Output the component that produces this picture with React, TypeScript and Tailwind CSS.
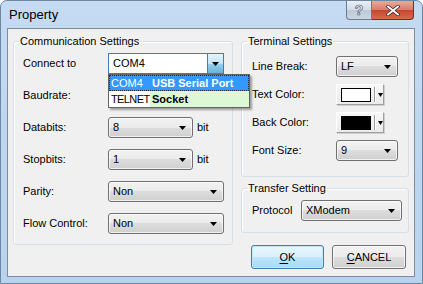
import React from "react";

const Arrow = ({ w = 7 }: { w?: number }) => (
  <svg width={w} height={4} viewBox={`0 0 ${w} 4`} className="shrink-0">
    <polygon points={`0,0 ${w},0 ${w / 2},4`} fill="#000" />
  </svg>
);

const Combo = ({ value, className }: { value: string; className: string }) => (
  <div
    className={`h-[21px] flex items-center justify-between pl-[4px] pr-[6px] border border-[#707070] rounded-[3px] shadow-[inset_0_0_0_1px_rgba(255,255,255,0.7)] bg-[linear-gradient(to_bottom,#f2f2f2_0%,#ebebeb_50%,#dddddd_50%,#cfcfcf_100%)] ${className}`}
  >
    <span>{value}</span>
    <Arrow />
  </div>
);

const ColorBtn = ({ color }: { color: string }) => (
  <div className="h-[21px] w-[48px] flex items-center border border-t-white border-l-white border-r-[#a0a0a0] border-b-[#a0a0a0] bg-[linear-gradient(to_bottom,#f7f7f7,#ebebeb)] shadow-[1px_1px_0_#d0d0d0]">
    <div className={`ml-[4px] w-[30px] h-[14px] border border-black ${color}`} />
    <div className="ml-[3px] w-[2px] h-[15px] border-l border-l-[#a0a0a0] border-r border-r-white" />
    <div className="ml-[2px]">
      <Arrow w={5} />
    </div>
  </div>
);

const Label = ({ children }: { children: React.ReactNode }) => (
  <span className="leading-[21px]">{children}</span>
);

export default function App() {
  return (
    <div className="w-[423px] h-[284px] flex flex-col font-['Liberation_Sans',Arial,sans-serif] text-[11px] text-black bg-[linear-gradient(to_bottom,#c4dbf2,#bcd6ef_60%,#b7d3ee)] border border-[#6d87a3] rounded-t-[7px] overflow-hidden">
      {/* Title bar */}
      <div className="h-[27px] flex justify-between pl-[8px] pr-[8px]">
        <span className="self-center text-[13px] mt-[1px] text-black">Property</span>
        <div className="flex self-start">
          <div className="w-[26px] h-[19px] flex items-center justify-center border border-t-0 border-[#6b7c8e] rounded-bl-[4px] bg-[linear-gradient(to_bottom,#e8eef4,#d2dce6_50%,#bccad8_50%,#c9d6e3)]">
            <span className="text-[14px] font-bold text-white [-webkit-text-stroke:0.6px_#3d4b5a] leading-none">?</span>
          </div>
          <div className="w-[42px] h-[19px] flex items-center justify-center border border-t-0 border-l-0 border-[#7a2b22] rounded-br-[4px] bg-[linear-gradient(to_bottom,#e9a99b,#d97c68_50%,#c4462f_50%,#d86a4e)]">
            <svg width="14" height="11" viewBox="0 0 14 11">
              <path d="M2 1.5 L12 9.5 M12 1.5 L2 9.5" stroke="#3b2a28" strokeWidth="3.4" strokeLinecap="square" />
              <path d="M2 1.5 L12 9.5 M12 1.5 L2 9.5" stroke="#fff" strokeWidth="1.8" strokeLinecap="square" />
            </svg>
          </div>
        </div>
      </div>

      {/* Client area */}
      <div className="ml-[6px] mr-[7px] h-[249px] border border-[#7f8d9b] bg-[#f0f0f0] flex gap-[8px] pl-[5px] pr-[5px] pt-[5px] shadow-[0_1px_0_#8fe3ff]">
        {/* Communication Settings */}
        <fieldset className="w-[220px] h-[211px] border border-[#d5dfe5] rounded-[3px] shadow-[inset_1px_1px_0_#fff]">
          <legend className="ml-[5px] px-[1px] leading-[14px]">Communication Settings</legend>
          <div className="grid grid-cols-[85px_auto] gap-y-[11px] pl-[9px] pt-[5px] items-center">
            <Label>Connect to</Label>
            <div className="relative w-[116px]">
              <div className="h-[21px] flex items-center border border-[#3c7fb1] bg-white pl-[4px]">
                <span className="flex-1">COM4</span>
                <div className="w-[16px] h-[19px] flex items-center justify-center border-l border-[#3c7fb1] bg-[linear-gradient(to_bottom,#e5f4fc,#c4e5f6_50%,#98d1ef_50%,#68b3db)]">
                  <Arrow />
                </div>
              </div>
              <div className="absolute left-0 top-[21px] w-[142px] border border-[#646464] bg-white shadow-[2px_2px_2px_rgba(0,0,0,0.35)] z-10">
                <div className="flex h-[16px] bg-[#3399ff] text-white outline outline-1 outline-dotted outline-[#1b2a44] -outline-offset-1">
                  <span className="w-[42px] pl-[2px] leading-[16px]">COM4</span>
                  <span className="pl-[1px] font-bold leading-[16px]">USB Serial Port</span>
                </div>
                <div className="flex h-[16px]">
                  <span className="w-[41px] pl-[2px] leading-[16px] bg-white tracking-[-0.6px] whitespace-nowrap">TELNET</span>
                  <span className="flex-1 pl-[2px] font-bold leading-[16px] bg-[#dcf8d6]">Socket</span>
                </div>
              </div>
            </div>

            <Label>Baudrate:</Label>
            <Combo value="" className="w-[116px]" />

            <Label>Databits:</Label>
            <div className="flex items-center gap-[4px]">
              <Combo value="8" className="w-[85px]" />
              <span>bit</span>
            </div>

            <Label>Stopbits:</Label>
            <div className="flex items-center gap-[4px]">
              <Combo value="1" className="w-[85px]" />
              <span>bit</span>
            </div>

            <Label>Parity:</Label>
            <Combo value="Non" className="w-[116px]" />

            <Label>Flow Control:</Label>
            <Combo value="Non" className="w-[116px]" />
          </div>
        </fieldset>

        {/* Right column */}
        <div className="w-[168px] flex flex-col">
          <fieldset className="h-[143px] border border-[#d5dfe5] rounded-[3px] shadow-[inset_1px_1px_0_#fff]">
            <legend className="ml-[5px] px-[1px] leading-[14px]">Terminal Settings</legend>
            <div className="grid grid-cols-[84px_auto] gap-y-[7px] pl-[10px] pt-[8px] items-center">
              <Label>Line Break:</Label>
              <Combo value="LF" className="w-[62px]" />
              <Label>Text Color:</Label>
              <ColorBtn color="bg-white" />
              <Label>Back Color:</Label>
              <ColorBtn color="bg-black" />
              <Label>Font Size:</Label>
              <Combo value="9" className="w-[62px]" />
            </div>
          </fieldset>

          <fieldset className="mt-[4px] h-[52px] border border-[#d5dfe5] rounded-[3px] shadow-[inset_1px_1px_0_#fff]">
            <legend className="ml-[5px] px-[1px] leading-[14px]">Transfer Setting</legend>
            <div className="flex items-center pl-[10px] pt-[5px]">
              <span className="w-[49px]">Protocol</span>
              <Combo value="XModem" className="w-[101px]" />
            </div>
          </fieldset>

          <div className="mt-[12px] flex gap-[8px] pl-[10px]">
            <button className="w-[73px] h-[24px] border border-[#3c7fb1] rounded-[3px] shadow-[inset_0_0_0_1px_#bfe6fb] bg-[linear-gradient(to_bottom,#eaf6fd,#d9f0fc_50%,#bee6fd_50%,#a7d9f5)]">
              <span className="underline underline-offset-2">O</span>K
            </button>
            <button className="w-[74px] h-[24px] border border-[#707070] rounded-[3px] shadow-[inset_0_0_0_1px_rgba(255,255,255,0.7)] bg-[linear-gradient(to_bottom,#f2f2f2,#ebebeb_50%,#dddddd_50%,#cfcfcf)]">
              <span className="underline underline-offset-2">C</span>ANCEL
            </button>
          </div>
        </div>
      </div>
    </div>
  );
}
